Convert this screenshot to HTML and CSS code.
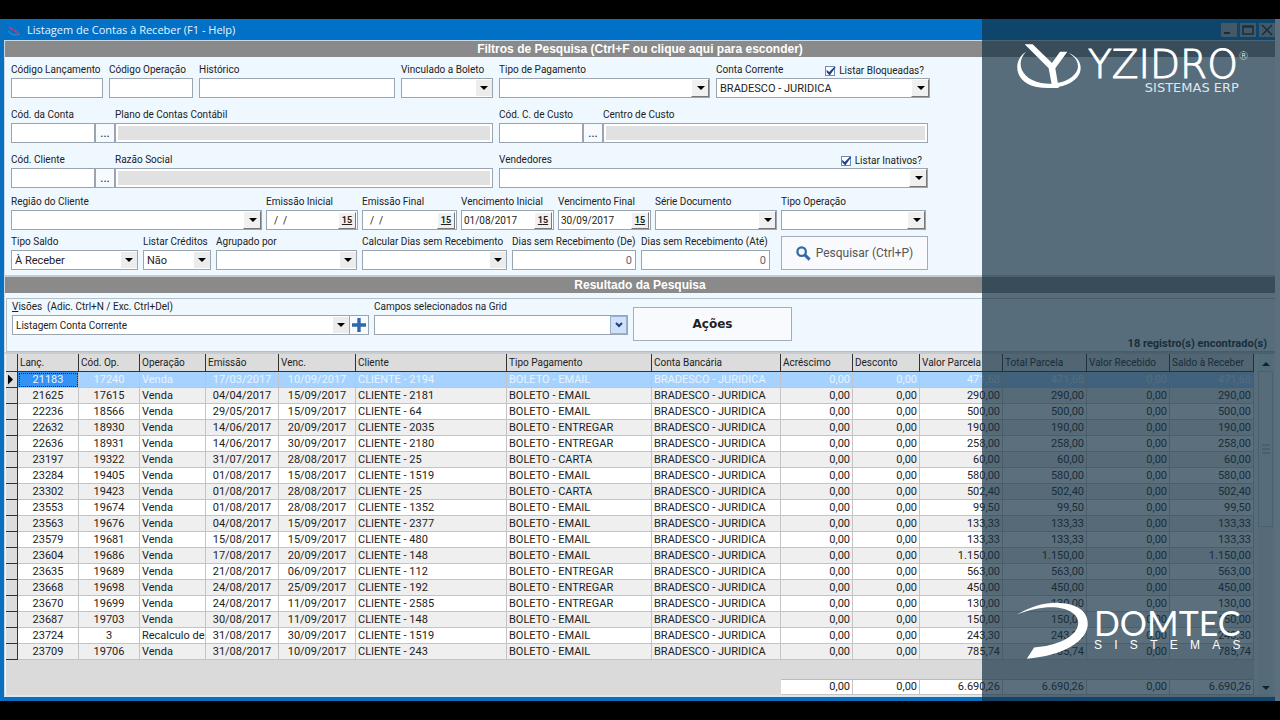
FILE: index.html
```html
<!DOCTYPE html>
<html lang="pt-BR">
<head>
    <meta charset="UTF-8">
    <meta name="viewport" content="width=device-width, initial-scale=1.0">
    <title>Listagem de Contas à Receber</title>
    <link rel="stylesheet" href="styles.css">
</head>
<body>
<div class="stage">
    <main class="window">
        <!-- Title bar -->
        <header class="titlebar">
            <svg class="app-icon" viewBox="0 0 14 14"><path d="M2 4l4 3M7 7l4 3" stroke="#a8447a" stroke-width="2"/><path d="M1 8q5 6 12 3" fill="none" stroke="#3f8fd6" stroke-width="1"/></svg>
            <h1>Listagem de Contas à Receber (F1 - Help)</h1>
            <div class="window-buttons">
                <button aria-label="Minimizar"><svg viewBox="0 0 16 14"><path d="M3 10h6" stroke="#222" stroke-width="2"/></svg></button>
                <button aria-label="Maximizar"><svg viewBox="0 0 16 14"><path d="M3 3h10v8H3zM3 4h10" fill="none" stroke="#222" stroke-width="1.5"/></svg></button>
                <button aria-label="Fechar"><svg viewBox="0 0 16 14"><path d="M3 2l10 10M13 2L3 12" stroke="#222" stroke-width="1.5"/></svg></button>
            </div>
        </header>

        <div class="client">
            <button class="banner">Filtros de Pesquisa (Ctrl+F ou clique aqui para esconder)</button>

            <!-- Filters -->
            <form class="filters">
                <div class="row">
                    <div class="field w92"><label for="lanc">Código Lançamento</label><input id="lanc" type="text"></div>
                    <div class="field w84"><label for="oper">Código Operação</label><input id="oper" type="text"></div>
                    <div class="field w196"><label for="hist">Histórico</label><input id="hist" type="text"></div>
                    <div class="field w92"><label for="boleto">Vinculado a Boleto</label><div class="combo"><select id="boleto"><option></option></select></div></div>
                    <div class="field w211"><label for="pagto">Tipo de Pagamento</label><div class="combo raised"><select id="pagto"><option></option></select></div></div>
                    <div class="field w214">
                        <div class="label-line"><label for="conta">Conta Corrente</label><label class="check"><input type="checkbox" checked>Listar Bloqueadas?</label></div>
                        <div class="combo raised"><select id="conta" class="large"><option>BRADESCO - JURIDICA</option></select></div>
                    </div>
                </div>

                <div class="row">
                    <div class="lookup">
                        <div class="field w84"><label for="cconta">Cód. da Conta</label><input id="cconta" type="text"></div>
                        <button type="button" class="dots" aria-label="Procurar conta">...</button>
                        <div class="field w378"><label for="plano">Plano de Contas Contábil</label><input id="plano" class="locked" type="text" readonly></div>
                    </div>
                    <div class="lookup">
                        <div class="field w84"><label for="ccusto">Cód. C. de Custo</label><input id="ccusto" type="text"></div>
                        <button type="button" class="dots" aria-label="Procurar centro de custo">...</button>
                        <div class="field w325"><label for="custo">Centro de Custo</label><input id="custo" class="locked" type="text" readonly></div>
                    </div>
                </div>

                <div class="row">
                    <div class="lookup">
                        <div class="field w84"><label for="ccli">Cód. Cliente</label><input id="ccli" type="text"></div>
                        <button type="button" class="dots" aria-label="Procurar cliente">...</button>
                        <div class="field w378"><label for="razao">Razão Social</label><input id="razao" class="locked" type="text" readonly></div>
                    </div>
                    <div class="field w429">
                        <div class="label-line"><label for="vend">Vendedores</label><label class="check"><input type="checkbox" checked>Listar Inativos?</label></div>
                        <div class="combo raised"><select id="vend"><option></option></select></div>
                    </div>
                </div>

                <div class="row row-dates">
                    <div class="field w251"><label for="regiao">Região do Cliente</label><div class="combo raised"><select id="regiao"><option></option></select></div></div>
                    <div class="field w92"><label for="emi1">Emissão Inicial</label><div class="date"><input id="emi1" type="text" value="  /  /"><button type="button">15</button></div></div>
                    <div class="field w95"><label for="emi2">Emissão Final</label><div class="date"><input id="emi2" type="text" value="  /  /"><button type="button">15</button></div></div>
                    <div class="field w93"><label for="ven1">Vencimento Inicial</label><div class="date"><input id="ven1" type="text" value="01/08/2017"><button type="button">15</button></div></div>
                    <div class="field w93"><label for="ven2">Vencimento Final</label><div class="date"><input id="ven2" type="text" value="30/09/2017"><button type="button">15</button></div></div>
                    <div class="field w122"><label for="serie">Série Documento</label><div class="combo raised"><select id="serie"><option></option></select></div></div>
                    <div class="field w145"><label for="tipoop">Tipo Operação</label><div class="combo raised"><select id="tipoop"><option></option></select></div></div>
                </div>

                <div class="row row-balance">
                    <div class="field w127"><label for="saldo">Tipo Saldo</label><div class="combo"><select id="saldo" class="large"><option>À Receber</option></select></div></div>
                    <div class="field w68"><label for="cred">Listar Créditos</label><div class="combo"><select id="cred" class="large"><option>Não</option></select></div></div>
                    <div class="field w141"><label for="agrup">Agrupado por</label><div class="combo"><select id="agrup"><option></option></select></div></div>
                    <div class="field w145"><label for="calc">Calcular Dias sem Recebimento</label><div class="combo"><select id="calc"><option></option></select></div></div>
                    <div class="field w124"><label for="de">Dias sem Recebimento (De)</label><input id="de" class="number" type="text" value="0"></div>
                    <div class="field w129"><label for="ate">Dias sem Recebimento (Até)</label><input id="ate" class="number" type="text" value="0"></div>
                    <button type="button" class="search">
                        <svg viewBox="0 0 16 16"><circle cx="6" cy="6" r="4.5" fill="none" stroke="#2f68a8" stroke-width="2.4"/><path d="M9.5 9.5l5 5" stroke="#2f68a8" stroke-width="3.2"/></svg>
                        Pesquisar (Ctrl+P)
                    </button>
                </div>
            </form>

            <h2 class="banner result-banner">Resultado da Pesquisa</h2>

            <!-- Views and actions -->
            <section class="tools">
                <div class="field view-field"><label for="visao"><u>V</u>isões&nbsp; (Adic. Ctrl+N / Exc. Ctrl+Del)</label>
                    <div class="view-line">
                        <div class="combo"><select id="visao"><option>Listagem Conta Corrente</option></select></div>
                        <button class="add" aria-label="Adicionar visão"><svg viewBox="0 0 14 14"><path d="M7 0v14M0 7h14" stroke="#2f68a8" stroke-width="3.4"/></svg></button>
                    </div>
                </div>
                <div class="field w254"><label for="campos">Campos selecionados na Grid</label><div class="combo blue"><select id="campos"><option></option></select><svg viewBox="0 0 8 6"><path d="M1 1l3 3 3-3" fill="none" stroke="#1c3f86" stroke-width="2"/></svg></div></div>
                <button class="actions">Ações</button>
                <p class="count">18 registro(s) encontrado(s)</p>
            </section>

            <!-- Grid -->
            <section class="grid">
                <div class="grid-body">
                    <table>
                        <colgroup>
                            <col class="c12"><col class="c61"><col class="c61"><col class="c66"><col class="c73"><col class="c77"><col class="c151"><col class="c145"><col class="c129"><col class="c72"><col class="c67"><col class="c83"><col class="c84"><col class="c83"><col class="c84">
                        </colgroup>
                        <thead>
                            <tr><th></th><th>Lanç.</th><th>Cód. Op.</th><th>Operação</th><th>Emissão</th><th>Venc.</th><th>Cliente</th><th>Tipo Pagamento</th><th>Conta Bancária</th><th>Acréscimo</th><th>Desconto</th><th>Valor Parcela</th><th>Total Parcela</th><th>Valor Recebido</th><th>Saldo à Receber</th></tr>
                        </thead>
                        <tbody id="rows"></tbody>
                        <tfoot>
                            <tr class="spacer"><td colspan="15"></td></tr>
                            <tr class="totals"><td colspan="9"></td><td>0,00</td><td>0,00</td><td>6.690,26</td><td>6.690,26</td><td>0,00</td><td>6.690,26</td></tr>
                        </tfoot>
                    </table>
                </div>
                <div class="scrollbar">
                    <button aria-label="Subir"><svg viewBox="0 0 8 4"><path d="M0 4l4-4 4 4z"/></svg></button>
                    <div class="thumb"><svg viewBox="0 0 8 10"><path d="M0 1h8M0 5h8M0 9h8" stroke="#9aa5b0"/></svg></div>
                    <button aria-label="Descer"><svg viewBox="0 0 8 4"><path d="M0 0l4 4 4-4z"/></svg></button>
                </div>
            </section>
        </div>
    </main>

    <!-- Brand panel over the window -->
    <aside class="brand">
        <div class="yzidro">
            <svg viewBox="0 0 198 138">
                <path d="M30 26C-10 50-8 118 62 132 130 144 194 118 194 74 194 54 178 38 158 30 180 44 186 56 186 72 182 108 124 130 76 120 14 106-2 60 30 26z" fill="#fff"/>
                <path d="M26 4h24L108 60 132 26h22L118 76 128 135h-19L98 76z" fill="#fff"/>
            </svg>
            <div class="yzidro-text">
                <strong>YZIDRO<sup>®</sup></strong>
                <span>SISTEMAS ERP</span>
            </div>
        </div>
        <div class="domtec">
            <svg viewBox="0 0 216 172">
                <path d="M2 38C50 10 96 0 132 3 180 5 216 26 216 66 216 118 140 164 32 171L54 137C120 134 190 104 187 60 184 22 112-6 2 38z" fill="#fff"/>
            </svg>
            <div class="domtec-text">
                <strong>DOMTEC</strong>
                <span class="spaced"><i>S</i><i>I</i><i>S</i><i>T</i><i>E</i><i>M</i><i>A</i><i>S</i></span>
            </div>
        </div>
    </aside>
</div>
<script src="script.js"></script>
</body>
</html>
```

FILE: styles.css
```css
* {
    box-sizing: border-box;
    margin: 0;
    padding: 0;
}
body {
    background-color: #000;
    font-family: Roboto, "Liberation Sans", sans-serif;
    font-size: 10px;
    color: #222;
}
button, input, select {
    font: inherit;
    color: inherit;
    border-radius: 0;
}
.stage {
    position: relative;
    margin: 19px 0;
    padding-right: 5px;
    background-color: #fff;
}

/* Window */
.window {
    background-color: #0b6fc0;
    padding: 0 0 4px 4px;
}
.titlebar {
    display: flex;
    align-items: center;
    height: 21px;
    gap: 6px;
    padding-left: 3px;
    background-color: #0071c7;
}
.titlebar h1 {
    flex: 1;
    font-family: "Open Sans", "Noto Sans", sans-serif;
    font-size: 11px;
    font-weight: normal;
    color: #e8f4ff;
}
.app-icon {
    width: 14px;
    height: 14px;
}
.window-buttons {
    display: flex;
    gap: 3px;
}
.window-buttons button {
    width: 16px;
    height: 14px;
    border: none;
    background-color: #aab4bd;
}
.window-buttons svg {
    display: block;
}
.client {
    background-color: #f0f8ff;
    border: 1px solid #c5d9e8;
    border-right: none;
    border-bottom: 2px solid #dbe8f2;
}
.banner {
    display: block;
    width: 100%;
    height: 16px;
    border: none;
    background-color: #8a8a8a;
    color: #fff;
    font-family: "Liberation Sans", Arial, sans-serif;
    font-size: 12px;
    font-weight: bold;
    line-height: 16px;
    text-align: center;
}
.result-banner {
    border-top: 2px solid #c6ccd0;
    height: 18px;
}

/* Filters */
.filters {
    padding: 6px 6px 5px 6px;
}
.row {
    display: flex;
    align-items: flex-end;
    gap: 6px;
    margin-bottom: 10px;
}
.row:nth-child(3) {
    margin-bottom: 7px;
}
.row-dates {
    gap: 4px;
    margin-bottom: 5px;
}
.row-balance {
    gap: 5px;
    margin-bottom: 0;
}
.lookup {
    display: flex;
    align-items: flex-end;
}
.field {
    flex: none;
}
.field label {
    display: block;
    height: 15px;
    line-height: 14px;
    white-space: nowrap;
}
.field input[type="text"], .combo {
    display: block;
    width: 100%;
    height: 20px;
    padding: 0 3px;
    border: 1px solid #9aa5b0;
    background-color: #fff;
    outline: none;
}
.field input.locked {
    background-color: #e1e1e1;
    box-shadow: inset 0 0 0 2px #fff;
}
.field input.number {
    text-align: right;
    font-size: 11px;
    color: #666;
}
.label-line {
    display: flex;
    justify-content: space-between;
    padding-right: 6px;
}
.field .check {
    display: flex;
    align-items: center;
    gap: 4px;
}
.check input {
    appearance: none;
    width: 10px;
    height: 10px;
    border: 1px solid #6d8bb0;
    background-color: #fff;
}
.check input:checked::before {
    content: "";
    display: block;
    width: 10px;
    height: 9px;
    background-color: #1f3f8a;
    clip-path: polygon(5% 35%, 30% 60%, 85% 0, 100% 0, 35% 100%, 5% 65%);
}
.dots {
    width: 20px;
    height: 20px;
    border: 1px solid #9aa5b0;
    background-color: #f7faff;
    font-size: 12px;
}
.w68 { width: 68px; }
.w84 { width: 84px; }
.w92 { width: 92px; }
.w93 { width: 93px; }
.w95 { width: 95px; }
.w122 { width: 122px; }
.w124 { width: 124px; }
.w127 { width: 127px; }
.w129 { width: 129px; }
.w141 { width: 141px; }
.w145 { width: 145px; }
.w196 { width: 196px; }
.w211 { width: 211px; }
.w214 { width: 214px; }
.w251 { width: 251px; }
.w254 { width: 254px; }
.w325 { width: 325px; }
.w378 { width: 378px; }
.w429 { width: 429px; }

/* Drop-downs: the button face and arrow share the select's cell */
.field .combo {
    display: grid;
    padding: 0;
}
.combo select {
    grid-area: 1 / 1;
    appearance: none;
    width: 100%;
    height: 18px;
    padding: 0 3px;
    border: none;
    background: none;
    outline: none;
}
.combo select.large {
    font-size: 11px;
}
.combo::before {
    content: "";
    grid-area: 1 / 1;
    justify-self: end;
    align-self: center;
    width: 16px;
    height: 16px;
    background-color: #ececec;
}
.combo::after {
    content: "";
    grid-area: 1 / 1;
    justify-self: end;
    align-self: center;
    width: 8px;
    height: 4px;
    margin-right: 4px;
    background-color: #000;
    clip-path: polygon(0 0, 100% 0, 50% 100%);
    pointer-events: none;
}
.combo.raised::before, .date button {
    border: 1px solid #fff;
    border-right-color: #777;
    border-bottom-color: #777;
    background-color: #f0f0f0;
}
.combo.blue::before {
    width: 15px;
    border: 1px solid #9ab0d0;
    background-color: #cfe0f8;
}
.combo.blue::after {
    display: none;
}
.combo.blue svg {
    grid-area: 1 / 1;
    justify-self: end;
    align-self: center;
    width: 8px;
    height: 6px;
    margin-right: 4px;
    pointer-events: none;
}
.date {
    display: flex;
    align-items: center;
    height: 20px;
    padding-right: 1px;
    border: 1px solid #9aa5b0;
    background-color: #fff;
}
.field .date input {
    flex: 1;
    min-width: 0;
    height: 18px;
    padding: 0 2px;
    border: none;
    white-space: pre;
}
.date button {
    width: 18px;
    height: 17px;
    font-size: 9px;
    font-weight: bold;
    text-decoration: underline;
}
.search {
    display: flex;
    align-items: center;
    justify-content: center;
    gap: 5px;
    width: 147px;
    height: 34px;
    margin-left: 6px;
    border: 1px solid #a3adba;
    background-color: #f8fafd;
    font-size: 12px;
    color: #555;
}
.search svg {
    width: 15px;
    height: 15px;
}

/* Tools */
.tools {
    display: flex;
    align-items: flex-start;
    gap: 5px;
    height: 54px;
    margin: 5px 0 0 1px;
    padding: 1px 8px 1px 5px;
    border: 1px solid #b4bec6;
    border-right: none;
}
.view-field {
    width: 357px;
}
.view-line {
    display: flex;
}
.view-line .combo {
    flex: 1;
}
.add {
    width: 19px;
    height: 20px;
    border: 1px solid #9aa5b0;
    border-left: none;
    background-color: #f7faff;
}
.add svg {
    display: block;
    width: 14px;
    height: 14px;
    margin: auto;
}
.actions {
    width: 159px;
    height: 34px;
    margin-top: 7px;
    border: 1px solid #a3adba;
    background-color: #f8fafd;
    font-family: "DejaVu Sans", sans-serif;
    font-size: 12px;
    font-weight: bold;
}
.count {
    flex: 1;
    align-self: flex-end;
    font-size: 11px;
    font-weight: bold;
    text-align: right;
}

/* Grid */
.grid {
    display: flex;
    gap: 4px;
    padding: 0 2px 0 1px;
    border-top: 2px solid #c6ccd0;
}
.grid-body {
    flex: 1;
    background-color: #dadada;
}
table {
    width: 100%;
    table-layout: fixed;
    border-collapse: separate;
    border-spacing: 0;
    font-size: 11px;
}
.c12 { width: 12px; }
.c61 { width: 61px; }
.c66 { width: 66px; }
.c67 { width: 67px; }
.c72 { width: 72px; }
.c73 { width: 73px; }
.c77 { width: 77px; }
.c83 { width: 83px; }
.c84 { width: 84px; }
.c129 { width: 129px; }
.c145 { width: 145px; }
.c151 { width: 151px; }
th, td {
    height: 16px;
    padding: 0 2px;
    line-height: 15px;
    border-right: 1px solid #c4c4c4;
    border-bottom: 1px solid #c4c4c4;
    overflow: hidden;
    white-space: nowrap;
    text-align: left;
}
th {
    height: 18px;
    font-size: 10px;
    font-weight: normal;
    background-color: #dcdcdc;
    border-right-color: #333;
    border-bottom-color: #333;
}
tbody tr {
    background-color: #fff;
}
tbody tr:nth-child(even) {
    background-color: #efefef;
}
td:nth-child(2), td:nth-child(3), td:nth-child(5), td:nth-child(6) {
    text-align: center;
}
td:nth-child(n+10) {
    text-align: right;
}
tbody td:first-child {
    background-color: #dcdcdc;
    border-color: #333;
}
tbody tr.selected {
    background-color: #a6d2ff;
    color: #e9f4ff;
}
tr.selected td:nth-child(2) {
    background-color: #3293f5;
    outline: 1px dotted #124;
    outline-offset: -2px;
}
tr.selected td:first-child::before {
    content: "";
    display: block;
    width: 5px;
    height: 10px;
    background-color: #000;
    clip-path: polygon(0 0, 100% 50%, 0 100%);
}
.spacer td {
    height: 19px;
    border: none;
}
.totals td, .totals td:nth-child(n) {
    line-height: 14px;
    text-align: right;
    background-color: #fff;
    border-top: 1px solid #bbb;
}
.totals td:nth-child(1) {
    background: none;
    border: none;
}
.scrollbar {
    display: flex;
    flex-direction: column;
    justify-content: space-between;
    width: 15px;
    background-color: #ededed;
}
.scrollbar button {
    height: 17px;
    border: none;
    background-color: #e8f0f6;
}
.scrollbar button svg {
    width: 8px;
    height: 4px;
}
.thumb {
    display: flex;
    align-items: center;
    justify-content: center;
    height: 156px;
    margin-bottom: auto;
    border: 1px solid #c4cdd4;
    background-color: #f0f5fa;
}
.thumb svg {
    width: 8px;
    height: 10px;
}

/* Brand panel */
.brand {
    position: absolute;
    top: 0;
    right: 0;
    bottom: 0;
    width: 298px;
    display: flex;
    flex-direction: column;
    justify-content: space-between;
    padding: 24px 28px 42px 34px;
    background-color: rgba(22, 50, 68, 0.7);
    color: #fff;
}
.yzidro, .domtec {
    display: flex;
    gap: 6px;
}
.yzidro > svg {
    width: 66px;
    height: 46px;
}
.yzidro-text {
    display: flex;
    flex-direction: column;
    align-items: flex-end;
    padding-top: 6px;
}
.yzidro-text strong {
    font-family: "DejaVu Sans", sans-serif;
    font-size: 39px;
    font-weight: 200;
    line-height: 32px;
    height: 32px;
    white-space: nowrap;
    -webkit-text-stroke: 1px #fff;
}
.yzidro-text sup {
    font-size: 11px;
    line-height: 11px;
    vertical-align: 18px;
    -webkit-text-stroke: 0;
}
.yzidro-text span {
    padding-right: 10px;
    font-family: "DejaVu Sans", sans-serif;
    font-size: 13px;
    line-height: 13px;
    color: #dde6ec;
}
.domtec > svg {
    width: 72px;
    height: 57px;
}
.domtec-text {
    padding-top: 5px;
}
.domtec-text strong {
    display: block;
    font-family: Lato, sans-serif;
    font-size: 34px;
    font-weight: normal;
    line-height: 32px;
}
.spaced {
    display: flex;
    justify-content: space-between;
    font-family: "Liberation Sans", sans-serif;
    font-size: 12px;
    line-height: 12px;
}
.spaced i {
    font-style: normal;
}
```

FILE: script.js
```js
// lanç, cód. op., operação, emissão, venc., cliente, tipo pagamento, valor
const lancamentos = [
    ["21183", "17240", "Venda", "17/03/2017", "10/09/2017", "2194", "EMAIL", "471,68"],
    ["21625", "17615", "Venda", "04/04/2017", "15/09/2017", "2181", "EMAIL", "290,00"],
    ["22236", "18566", "Venda", "29/05/2017", "15/09/2017", "64", "EMAIL", "500,00"],
    ["22632", "18930", "Venda", "14/06/2017", "20/09/2017", "2035", "ENTREGAR", "190,00"],
    ["22636", "18931", "Venda", "14/06/2017", "30/09/2017", "2180", "ENTREGAR", "258,00"],
    ["23197", "19322", "Venda", "31/07/2017", "28/08/2017", "25", "CARTA", "60,00"],
    ["23284", "19405", "Venda", "01/08/2017", "15/08/2017", "1519", "EMAIL", "580,00"],
    ["23302", "19423", "Venda", "01/08/2017", "28/08/2017", "25", "CARTA", "502,40"],
    ["23553", "19674", "Venda", "01/08/2017", "28/08/2017", "1352", "EMAIL", "99,50"],
    ["23563", "19676", "Venda", "04/08/2017", "15/09/2017", "2377", "EMAIL", "133,33"],
    ["23579", "19681", "Venda", "15/08/2017", "15/09/2017", "480", "EMAIL", "133,33"],
    ["23604", "19686", "Venda", "17/08/2017", "20/09/2017", "148", "EMAIL", "1.150,00"],
    ["23635", "19689", "Venda", "21/08/2017", "06/09/2017", "112", "ENTREGAR", "563,00"],
    ["23668", "19698", "Venda", "24/08/2017", "25/09/2017", "192", "ENTREGAR", "450,00"],
    ["23670", "19699", "Venda", "24/08/2017", "11/09/2017", "2585", "ENTREGAR", "130,00"],
    ["23687", "19703", "Venda", "30/08/2017", "11/09/2017", "148", "EMAIL", "150,00"],
    ["23724", "3", "Recalculo de I", "31/08/2017", "30/09/2017", "1519", "EMAIL", "243,30"],
    ["23709", "19706", "Venda", "31/08/2017", "10/09/2017", "243", "EMAIL", "785,74"]
];

const tbody = document.getElementById("rows");
lancamentos.forEach(([lanc, op, tipo, emissao, venc, cliente, pagto, valor], i) => {
    const tr = document.createElement("tr");
    if (i === 0) tr.className = "selected";
    const cells = ["", lanc, op, tipo, emissao, venc, "CLIENTE - " + cliente, "BOLETO - " + pagto,
        "BRADESCO - JURIDICA", "0,00", "0,00", valor, valor, "0,00", valor];
    cells.forEach((text, col) => {
        const td = document.createElement("td");
        td.textContent = text;
        if (col === 3) td.className = "tipo";
        tr.appendChild(td);
    });
    tbody.appendChild(tr);
});
```
